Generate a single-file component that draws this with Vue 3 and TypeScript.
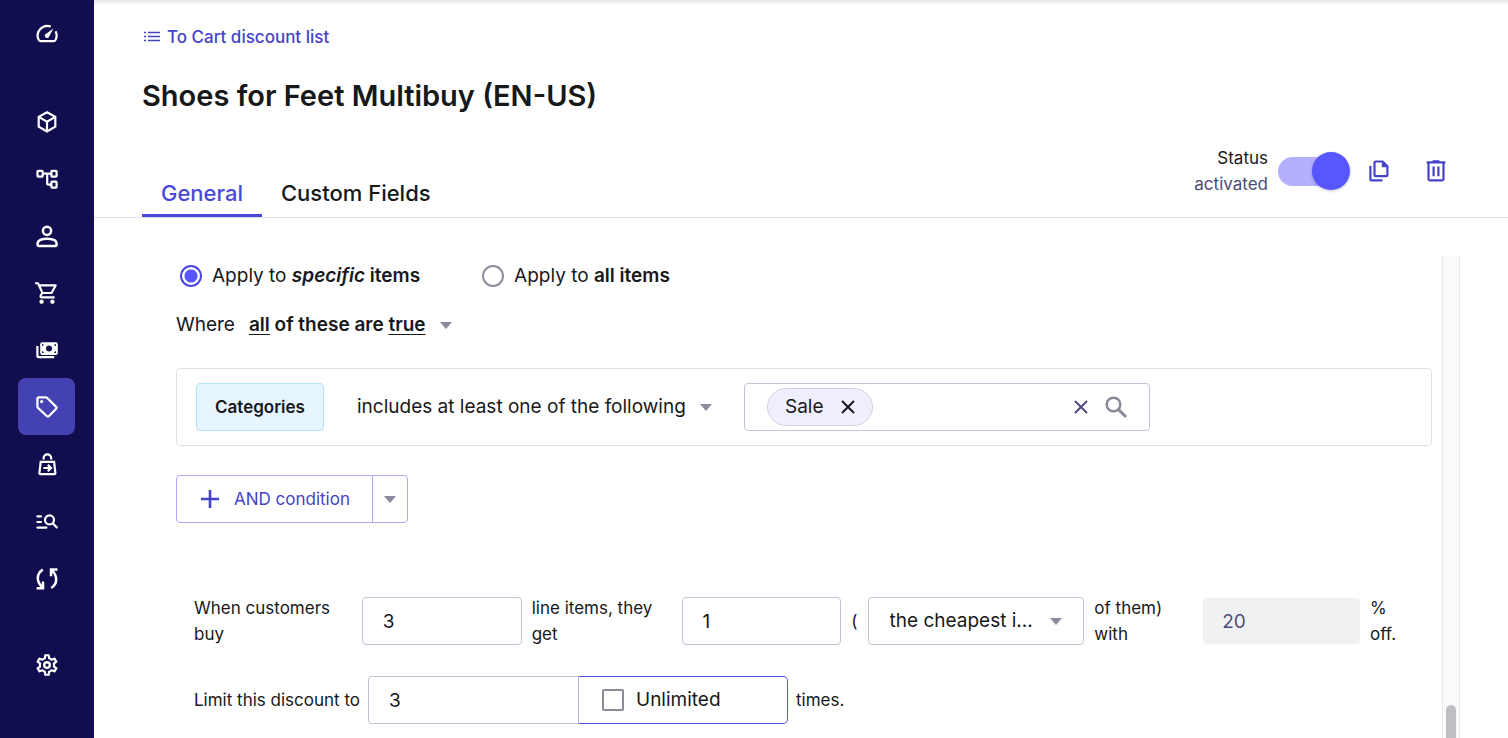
<script setup lang="ts">
import { ref } from 'vue'

interface NavItem {
  id: string
  label: string
}

const mainNav: NavItem[] = [
  { id: 'products', label: 'Products' },
  { id: 'categories', label: 'Categories' },
  { id: 'customers', label: 'Customers' },
  { id: 'orders', label: 'Orders' },
  { id: 'prices', label: 'Prices' },
  { id: 'discounts', label: 'Discounts' },
  { id: 'bundles', label: 'Bundles' },
  { id: 'search', label: 'Search' },
  { id: 'operations', label: 'Operations' },
]
const activeNav = ref('discounts')
const scope = ref('specific')
const enabled = ref(true)
const unlimited = ref(false)
const buyCount = ref('3')
const getCount = ref('1')
const percent = ref('20')
const limit = ref('3')
</script>

<template>
  <div class="app">
    <nav class="sidebar" aria-label="Main">
      <button class="nav-item" type="button" aria-label="Dashboard">
        <svg class="icon" viewBox="0 0 24 24">
          <path class="line" d="M15.8 4.6A9.6 9.6 0 0 0 3.6 17.6Q4.3 19.2 5.6 19.2H18.7Q20 19.2 20.7 17.6A9.6 9.6 0 0 0 20.6 9.3" />
          <path class="fill" d="M18.4 6.4L13.9 14.9A2.2 2.2 0 0 1 10.1 12.6Z" />
        </svg>
      </button>

      <div class="nav-group">
        <button
          v-for="item in mainNav"
          :key="item.id"
          class="nav-item"
          :class="{ active: item.id === activeNav }"
          type="button"
          :aria-label="item.label"
          @click="activeNav = item.id"
        >
          <svg v-if="item.id === 'products'" class="icon" viewBox="0 0 24 24">
            <path class="line" d="M12 2.2L20.3 6.9V16.7L12 21.4L3.7 16.7V6.9ZM3.7 6.9L12 11.7L20.3 6.9M12 11.7V21.4" />
          </svg>
          <svg v-else-if="item.id === 'categories'" class="icon" viewBox="0 0 24 24">
            <rect class="line" x="2.5" y="3.8" width="5.2" height="5.8" rx=".8" />
            <rect class="line" x="16.4" y="3.8" width="5.2" height="5.8" rx=".8" />
            <rect class="line" x="16.4" y="14.6" width="5.2" height="6" rx=".8" />
            <path class="line" d="M8 6.7H16M12.2 6.7V16.2Q12.2 17.6 13.6 17.6H16" />
          </svg>
          <svg v-else-if="item.id === 'customers'" class="icon" viewBox="0 0 24 24">
            <circle class="line bold" cx="12" cy="6.8" r="4.1" />
            <path class="line bold" d="M2.6 19.6C2.6 16.2 7 14.7 12 14.7S21.6 16.2 21.6 19.6V20.6Q21.6 22 20.2 22H4Q2.6 22 2.6 20.6Z" />
          </svg>
          <svg v-else-if="item.id === 'orders'" class="icon large" viewBox="0 0 24 24">
            <path class="fill" d="M15.55 13c.75 0 1.41-.41 1.75-1.03l3.58-6.49A.996.996 0 0 0 20.01 4H5.21l-.94-2H1v2h2l3.6 7.59-1.35 2.44C4.52 15.37 5.48 17 7 17h12v-2H7l1.1-2h7.45zM6.16 6h12.15l-2.76 5H8.53L6.16 6zM7 18c-1.1 0-1.99.9-1.99 2S5.9 22 7 22s2-.9 2-2-.9-2-2-2zm10 0c-1.1 0-1.99.9-1.99 2s.89 2 1.99 2 2-.9 2-2-.9-2-2-2z" />
          </svg>
          <svg v-else-if="item.id === 'prices'" class="icon" viewBox="0 0 24 24">
            <rect class="fill" x="5.2" y="4.2" width="17.6" height="12.8" rx="2" />
            <circle class="cut" cx="14" cy="10.6" r="3" />
            <path class="cut" d="M7 8V6.3H8.8A1.7 1.7 0 0 1 7 8ZM21 8V6.3H19.2A1.7 1.7 0 0 0 21 8ZM7 13.2V14.9H8.8A1.7 1.7 0 0 0 7 13.2ZM21 13.2V14.9H19.2A1.7 1.7 0 0 1 21 13.2Z" />
            <path class="line" d="M2.4 8V17.4Q2.4 19.2 4.2 19.2H19.2" />
          </svg>
          <svg v-else-if="item.id === 'discounts'" class="icon" viewBox="0 0 24 24">
            <path class="line" d="M3.8 2.4H10.9q.8 0 1.4.6L21.2 11.9q.9.9 0 1.8L13.8 21.3q-.9.8-1.8 0L3 12.9q-.6-.6-.6-1.4V3.8q0-1.4 1.4-1.4z" />
            <circle class="fill" cx="6.6" cy="6.6" r="1.6" />
          </svg>
          <svg v-else-if="item.id === 'bundles'" class="icon" viewBox="0 0 24 24">
            <path class="line" d="M5.7 9.8H19.1L20.4 21.2Q20.4 22.2 19.4 22.2H5.4Q4.4 22.2 4.4 21.2ZM8.6 7.6V6.2A3.8 3.8 0 0 1 16.2 6.2V7.6M8.4 16H15.6M12.8 12.8L16 16L12.8 19.2" />
          </svg>
          <svg v-else-if="item.id === 'search'" class="icon" viewBox="0 0 24 24">
            <path class="line round" d="M2.4 7.4H6M2.4 13H6M2.4 18.6H11.4M18 14.4L21.8 18.4" />
            <circle class="line" cx="14.5" cy="10.9" r="4.5" />
          </svg>
          <svg v-else class="icon" viewBox="0 0 24 24">
            <path class="line bold" d="M7.8 3.6C1.6 7.4 .8 15.4 7.4 21.4M16.2 22C22.4 18.2 23.2 10.2 16.6 4.2M8 15.4V22.2H1.6M16 10.2V3.4H22.4" />
          </svg>
        </button>
      </div>

      <button class="nav-item settings" type="button" aria-label="Settings">
        <svg class="icon large" viewBox="0 0 24 24">
          <path class="fill" d="M19.43 12.98c.04-.32.07-.64.07-.98 0-.34-.03-.66-.07-.98l2.11-1.65c.19-.15.24-.42.12-.64l-2-3.46c-.09-.16-.26-.25-.44-.25-.06 0-.12.01-.17.03l-2.49 1c-.52-.4-1.08-.73-1.69-.98l-.38-2.65C14.46 2.18 14.25 2 14 2h-4c-.25 0-.46.18-.49.42l-.38 2.65c-.61.25-1.17.59-1.69.98l-2.49-1c-.06-.02-.12-.03-.18-.03-.17 0-.34.09-.43.25l-2 3.46c-.13.22-.07.49.12.64l2.11 1.65c-.04.32-.07.65-.07.98 0 .33.03.66.07.98l-2.11 1.65c-.19.15-.24.42-.12.64l2 3.46c.09.16.26.25.44.25.06 0 .12-.01.17-.03l2.49-1c.52.4 1.08.73 1.69.98l.38 2.65c.03.24.24.42.49.42h4c.25 0 .46-.18.49-.42l.38-2.65c.61-.25 1.17-.59 1.69-.98l2.49 1c.06.02.12.03.18.03.17 0 .34-.09.43-.25l2-3.46c.12-.22.07-.49-.12-.64l-2.11-1.65zm-1.98-1.71c.04.31.05.52.05.73 0 .21-.02.43-.05.73l-.14 1.13.89.7 1.08.84-.7 1.21-1.27-.51-1.04-.42-.9.68c-.43.32-.84.56-1.25.73l-1.06.43-.16 1.13-.2 1.35h-1.4l-.19-1.35-.16-1.13-1.06-.43c-.43-.18-.83-.41-1.23-.71l-.91-.7-1.06.43-1.27.51-.7-1.21 1.08-.84.89-.7-.14-1.13c-.03-.31-.05-.54-.05-.74s.02-.43.05-.73l.14-1.13-.89-.7-1.08-.84.7-1.21 1.27.51 1.04.42.9-.68c.43-.32.84-.56 1.25-.73l1.06-.43.16-1.13.2-1.35h1.39l.19 1.35.16 1.13 1.06.43c.43.18.83.41 1.23.71l.91.7 1.06-.43 1.27-.51.7 1.21-1.07.85-.89.7.14 1.13z" />
          <circle class="line" cx="12" cy="12" r="2.6" />
        </svg>
      </button>
    </nav>

    <main class="page">
      <header class="head">
        <a class="back" href="#list">
          <svg class="list-icon" viewBox="0 0 16 12">
            <path d="M0 1.5H2M0 5.5H2M0 9.5H2M4 1.5H16M4 5.5H16M4 9.5H16" />
          </svg>
          To Cart discount list
        </a>
        <h1>Shoes for Feet Multibuy (EN-US)</h1>
        <div class="bar">
          <div class="tabs" role="tablist">
            <button class="tab selected" type="button" role="tab" aria-selected="true">General</button>
            <button class="tab" type="button" role="tab" aria-selected="false">Custom Fields</button>
          </div>
          <div class="tools">
            <label class="status" for="status">
              <span>Status</span>
              <span class="state">activated</span>
            </label>
            <input id="status" v-model="enabled" class="switch" type="checkbox" role="switch" />
            <div class="actions">
              <button class="tool" type="button" aria-label="Duplicate">
                <svg class="icon" viewBox="0 0 24 24">
                  <path class="line" d="M8.7 2.5H15.7L20.4 7.2V16Q20.4 17.2 19.2 17.2H8.7Q7.5 17.2 7.5 16V3.7Q7.5 2.5 8.7 2.5Z" />
                  <path class="fill" d="M14.8 2.2V8.2H20.8Z" />
                  <path class="line" d="M3.4 6.8V20.2Q3.4 21.4 4.6 21.4H15.4" />
                </svg>
              </button>
              <button class="tool" type="button" aria-label="Delete">
                <svg class="icon" viewBox="0 0 24 24">
                  <path class="line" d="M2.6 3.4H21.4M8.6 2.4H15.4M4.5 3.4V20Q4.5 21.3 5.8 21.3H18.2Q19.5 21.3 19.5 20V3.4M9.6 7.4V17.2M14.4 7.4V17.2" />
                </svg>
              </button>
            </div>
          </div>
        </div>
      </header>

      <div class="scroller">
        <section class="content">
          <div class="radios">
            <label class="choice">
              <input v-model="scope" type="radio" name="scope" value="specific" />
              <span>Apply to <b><i>specific</i> items</b></span>
            </label>
            <label class="choice">
              <input v-model="scope" type="radio" name="scope" value="all" />
              <span>Apply to <b>all items</b></span>
            </label>
          </div>

          <div class="where">
            <span>Where</span>
            <button class="match" type="button" aria-haspopup="listbox">
              <b><u>all</u> of these are <u>true</u></b>
              <svg class="caret" viewBox="0 0 12 7"><path d="M0 0H12L6 7Z" /></svg>
            </button>
          </div>

          <div class="condition">
            <button class="field-name" type="button">Categories</button>
            <span class="pick operator">
              <select aria-label="Operator">
                <option>includes at least one of the following</option>
              </select>
              <svg class="caret" viewBox="0 0 12 7"><path d="M0 0H12L6 7Z" /></svg>
            </span>
            <div class="values">
              <span class="chip">
                Sale
                <button type="button" aria-label="Remove Sale">
                  <svg class="cross" viewBox="0 0 14 14"><path d="M1 1L13 13M13 1L1 13" /></svg>
                </button>
              </span>
              <input class="value-input" type="text" aria-label="Category" />
              <button class="clear" type="button" aria-label="Clear">
                <svg class="cross" viewBox="0 0 14 14"><path d="M1 1L13 13M13 1L1 13" /></svg>
              </button>
              <button class="lens" type="button" aria-label="Search">
                <svg class="icon" viewBox="0 0 24 24">
                  <circle class="line bold" cx="9.5" cy="9.5" r="6.8" />
                  <path class="line heavy" d="M14.6 14.6L22 22" />
                </svg>
              </button>
            </div>
          </div>

          <div class="add">
            <button class="add-main" type="button">
              <svg class="plus" viewBox="0 0 18 18"><path d="M9 0V18M0 9H18" /></svg>
              AND condition
            </button>
            <button class="add-more" type="button" aria-label="More conditions">
              <svg class="caret" viewBox="0 0 12 7"><path d="M0 0H12L6 7Z" /></svg>
            </button>
          </div>

          <div class="rule">
            <label for="buy">When customers<br />buy</label>
            <input id="buy" v-model="buyCount" class="box" type="text" />
            <label for="get">line items, they<br />get</label>
            <input id="get" v-model="getCount" class="box" type="text" />
            <span>(</span>
            <span class="pick boxed">
              <select aria-label="Selection">
                <option>the cheapest i...</option>
              </select>
              <svg class="caret" viewBox="0 0 12 7"><path d="M0 0H12L6 7Z" /></svg>
            </span>
            <label for="percent">of them)<br />with</label>
            <input id="percent" v-model="percent" class="box" type="text" disabled />
            <span>%<br />off.</span>
          </div>

          <div class="limit">
            <label for="limit">Limit this discount to</label>
            <div class="joined">
              <input id="limit" v-model="limit" class="box" type="text" />
              <label class="unlimited">
                <input v-model="unlimited" type="checkbox" />
                Unlimited
              </label>
            </div>
            <span>times.</span>
          </div>
        </section>
        <div class="track"><div class="thumb"></div></div>
      </div>
    </main>
  </div>
</template>

<style>
body {
  margin: 0;
  background: #fff;
}
</style>

<style scoped>
.app {
  display: flex;
  min-height: 100vh;
  font-family: Inter, "Liberation Sans", sans-serif;
  font-size: 19px;
  line-height: 28px;
  color: #17181a;
}
.app * {
  box-sizing: border-box;
}
button,
input,
select {
  margin: 0;
  padding: 0;
  border: 0;
  background: none;
  font: inherit;
  color: inherit;
  border-radius: 0;
}
svg {
  display: block;
  flex: none;
}

.sidebar {
  flex: none;
  width: 94px;
  padding: 5px 19px 5px 18px;
  background: #110e4f;
  color: #fff;
}
.nav-group {
  margin-top: 31px;
}
.nav-item {
  display: grid;
  place-items: center;
  width: 57px;
  height: 57px;
  border-radius: 8px;
}
.nav-item.active {
  background: #4442b3;
}
.settings {
  margin-top: 30px;
}
.icon {
  width: 24px;
  height: 24px;
}
.icon.large {
  width: 26px;
  height: 26px;
}
.line {
  fill: none;
  stroke: currentColor;
  stroke-width: 2.2;
}
.line.bold {
  stroke-width: 2.5;
}
.line.heavy {
  stroke-width: 3;
}
.line.round {
  stroke-linecap: round;
}
.fill {
  fill: currentColor;
}
.cut {
  fill: #110e4f;
}

.page {
  flex: 1;
  min-width: 0;
  display: flex;
  flex-direction: column;
}
.head {
  padding: 24px 48px 0;
  border-bottom: 1px solid #dfe0e6;
  background: linear-gradient(#e3e4e6, #fff 5px);
}
.back {
  display: flex;
  align-items: center;
  gap: 7px;
  width: fit-content;
  padding-left: 2px;
  font-size: 17px;
  line-height: 26px;
  font-weight: 500;
  color: #4543c6;
  text-decoration: none;
}
.list-icon {
  width: 16px;
  height: 12px;
  fill: none;
  stroke: currentColor;
  stroke-width: 1.4;
}
h1 {
  margin: 26px 0 29px;
  font-size: 29px;
  line-height: 40px;
  font-weight: 600;
}
.bar {
  display: flex;
  justify-content: space-between;
  align-items: flex-end;
}
.tabs {
  display: flex;
}
.tab {
  padding: 0 19px 7px;
  border-bottom: 3px solid transparent;
  font-size: 22px;
  font-weight: 500;
}
.tab.selected {
  color: #4a48dc;
  border-bottom-color: #4a48dc;
}
.tools {
  display: flex;
  align-items: center;
  gap: 10px;
  margin: 0 5px 20px 0;
}
.status {
  display: flex;
  flex-direction: column;
  text-align: right;
  font-size: 17px;
  line-height: 26px;
}
.state {
  color: #4c4a75;
}
.switch {
  appearance: none;
  display: grid;
  grid-template: 38px / 72px;
  align-items: center;
}
.switch::before,
.switch::after {
  content: "";
  grid-area: 1 / 1;
}
.switch::before {
  height: 29px;
  width: 62px;
  border-radius: 15px;
  background: #b4afff;
}
.switch::after {
  width: 38px;
  height: 38px;
  border-radius: 50%;
  background: #5856ff;
  box-shadow: 0 1px 3px rgba(20, 20, 60, 0.25);
}
.switch:checked::after {
  justify-self: end;
}
.actions {
  display: flex;
  gap: 19px;
}
.tool {
  display: grid;
  place-items: center;
  width: 38px;
  height: 38px;
  color: #4543c9;
}

.scroller {
  flex: 1;
  display: flex;
  gap: 10px;
  margin: 38px 48px 0 82px;
}
.content {
  flex: 1;
  min-width: 0;
  padding: 6px 0 15px;
}
.radios {
  display: flex;
  gap: 62px;
  padding-left: 4px;
}
.choice {
  display: flex;
  align-items: center;
  gap: 10px;
}
.choice b {
  font-weight: 600;
}
.choice input {
  appearance: none;
  width: 22px;
  height: 22px;
  border: 2px solid #8d8e9e;
  border-radius: 50%;
}
.choice input:checked {
  border-color: #4b49e0;
  background: radial-gradient(circle, #5856ff 6px, transparent 7px);
}
.where {
  display: flex;
  gap: 14px;
  margin-top: 21px;
}
.match {
  display: flex;
  align-items: center;
  gap: 14px;
}
.match b {
  font-weight: 600;
}
.match u {
  text-underline-offset: 3px;
}
.caret {
  width: 12px;
  height: 7px;
  fill: #8a8b9c;
}
.condition {
  display: flex;
  align-items: center;
  margin-top: 29px;
  padding: 14px 19px;
  border: 1px solid #e0e1e8;
  border-radius: 4px;
}
.field-name {
  height: 48px;
  width: 128px;
  border: 1px solid #b5e2fb;
  border-radius: 4px;
  background: #e6f5ff;
  font-size: 17px;
  font-weight: 600;
}
.pick {
  display: grid;
  align-items: center;
}
.pick select,
.pick .caret {
  grid-area: 1 / 1;
}
.pick select {
  appearance: none;
  height: 48px;
}
.pick .caret {
  justify-self: end;
  pointer-events: none;
}
.operator {
  margin: 0 32px 0 33px;
}
.operator select {
  padding-right: 26px;
}
.values {
  display: flex;
  align-items: center;
  width: 406px;
  height: 48px;
  padding: 0 21px 0 22px;
  border: 1px solid #c3c4d6;
  border-radius: 4px;
}
.chip {
  display: flex;
  align-items: center;
  gap: 17px;
  height: 38px;
  padding: 0 17px;
  border: 1px solid #d3d3e0;
  border-radius: 19px;
  background: #f0effe;
}
.cross {
  width: 14px;
  height: 14px;
  fill: none;
  stroke: currentColor;
  stroke-width: 2;
}
.value-input {
  flex: 1;
  min-width: 0;
  outline: 0;
}
.clear {
  color: #4c4a80;
}
.lens {
  margin-left: 16px;
  color: #8a8b98;
}
.add {
  display: inline-flex;
  height: 48px;
  margin-top: 29px;
  border: 1px solid #aeabf8;
  border-radius: 4px;
  vertical-align: top;
}
.add-main {
  display: flex;
  align-items: center;
  gap: 15px;
  padding: 0 22px 0 24px;
  border-right: 1px solid #aeabf8;
  font-size: 17px;
  color: #4543c9;
}
.plus {
  width: 18px;
  height: 18px;
  stroke: currentColor;
  stroke-width: 2.6;
}
.add-more {
  width: 34px;
  display: grid;
  place-items: center;
}
.rule {
  display: grid;
  grid-template-columns: 158fr 160fr 140fr 160fr 5fr 217fr 99fr 157fr 44fr;
  align-items: center;
  gap: 10px;
  margin-top: 72px;
  padding: 0 18px;
  font-size: 17px;
  line-height: 26px;
}
.box {
  min-width: 0;
  width: 100%;
  height: 48px;
  padding: 0 20px;
  border: 1px solid #c3c4d6;
  border-radius: 4px;
  font-size: 19px;
}
.box:disabled {
  height: 46px;
  padding: 0 19px;
  border: 0;
  background: #f0f1f3;
  color: #4f4d78;
}
.boxed {
  border: 1px solid #c3c4d6;
  border-radius: 4px;
  font-size: 19px;
}
.boxed select {
  width: 100%;
  height: 46px;
  padding: 0 48px 0 21px;
}
.boxed .caret {
  margin-right: 21px;
}
.limit {
  display: flex;
  align-items: center;
  gap: 8px;
  margin-top: 29px;
  padding: 0 18px;
  font-size: 17px;
}
.joined {
  display: grid;
  grid-template-columns: 1fr 1fr;
  width: 420px;
}
.joined .box {
  border-right: 0;
  border-radius: 4px 0 0 4px;
}
.unlimited {
  display: flex;
  align-items: center;
  gap: 12px;
  height: 48px;
  padding-left: 23px;
  border: 1px solid #5452e0;
  border-left-color: #b5b4de;
  border-radius: 0 5px 5px 0;
  font-size: 19px;
}
.unlimited input {
  appearance: none;
  width: 22px;
  height: 22px;
  border: 2px solid #8a8b98;
  border-radius: 2px;
}
.unlimited input:checked {
  background: #5856ff;
}
.track {
  flex: none;
  display: flex;
  align-items: flex-end;
  justify-content: center;
  width: 18px;
  border: solid #e8eaea;
  border-width: 0 1px;
  background: #fafbfb;
}
.thumb {
  width: 10px;
  height: 34px;
  border-radius: 5px 5px 0 0;
  background: #bdbfc2;
}
</style>
